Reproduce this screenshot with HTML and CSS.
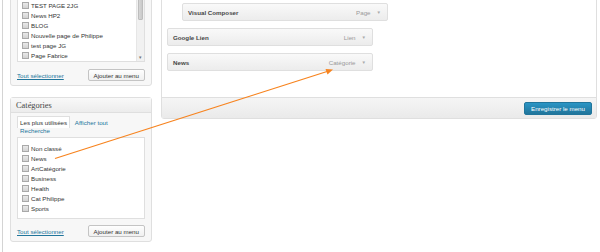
FILE: index.html
```html
<!DOCTYPE html>
<html lang="fr">
<head>
    <meta charset="UTF-8">
    <meta name="viewport" content="width=device-width, initial-scale=1.0">
    <title>Menus</title>
    <link rel="stylesheet" href="styles.css">
</head>
<body>
    <div class="screen">
        <div class="sidebar">
            <div class="box box-pages">
                <div class="checklist">
                    <ul class="items">
                        <li><span class="cb"></span>TEST PAGE 2JG</li>
                        <li><span class="cb"></span>News HP2</li>
                        <li><span class="cb"></span>BLOG</li>
                        <li><span class="cb"></span>Nouvelle page de Philippe</li>
                        <li><span class="cb"></span>test page JG</li>
                        <li><span class="cb"></span>Page Fabrice</li>
                        <li><span class="cb"></span>Visual Composer</li>
                    </ul>
                    <div class="scrollbar">
                        <span class="thumb"></span>
                        <span class="down">&#9662;</span>
                    </div>
                </div>
                <div class="box-actions">
                    <a href="#" class="select-all">Tout sélectionner</a>
                    <button class="btn">Ajouter au menu</button>
                </div>
            </div>

            <div class="box">
                <h3>Catégories</h3>
                <div class="box-inside">
                    <ul class="tabs">
                        <li class="active">Les plus utilisées</li>
                        <li><a href="#">Afficher tout</a></li>
                        <li><a href="#">Recherche</a></li>
                    </ul>
                    <div class="checklist cat-list">
                        <ul class="items">
                            <li><span class="cb"></span>Non classé</li>
                            <li><span class="cb"></span>News</li>
                            <li><span class="cb"></span>ArtCatégorie</li>
                            <li><span class="cb"></span>Business</li>
                            <li><span class="cb"></span>Health</li>
                            <li><span class="cb"></span>Cat Philippe</li>
                            <li><span class="cb"></span>Sports</li>
                        </ul>
                    </div>
                    <div class="box-actions">
                        <a href="#" class="select-all">Tout sélectionner</a>
                        <button class="btn">Ajouter au menu</button>
                    </div>
                </div>
            </div>
        </div>

        <div class="menu-panel">
            <div class="menu-body">
                <div class="menu-item depth-1">
                    <span class="item-title">Visual Composer</span>
                    <span class="item-type">Page</span>
                    <span class="item-arrow">&#9660;</span>
                </div>
                <div class="menu-item">
                    <span class="item-title">Google Lien</span>
                    <span class="item-type">Lien</span>
                    <span class="item-arrow">&#9660;</span>
                </div>
                <div class="menu-item">
                    <span class="item-title">News</span>
                    <span class="item-type">Catégorie</span>
                    <span class="item-arrow">&#9660;</span>
                </div>
            </div>
            <div class="menu-footer">
                <button class="btn btn-primary">Enregistrer le menu</button>
            </div>
        </div>
    </div>

    <!-- annotation: fleche de la categorie vers l'element du menu -->
    <svg class="annotation" width="600" height="252" viewBox="0 0 600 252">
        <line x1="55" y1="158.5" x2="327" y2="71.5" stroke="#f7831e" stroke-width="1.2"/>
        <polygon points="333,69.5 325.5,69 327.5,74.5" fill="#f7831e"/>
    </svg>
</body>
</html>
```

FILE: styles.css
```css
html, body {
    margin: 0;
    height: 100%;
}

body {
    font-family: "Liberation Sans", Arial, sans-serif;
    font-size: 6.2px;
    color: #333;
    background-color: #fff;
    overflow: hidden;
    position: relative;
}

ul {
    list-style: none;
    margin: 0;
    padding: 0;
}

a {
    color: #21759b;
    text-decoration: none;
}

/* la page est defilee de 20px vers le bas */
.screen {
    display: flex;
    align-items: flex-start;
    gap: 9px;
    margin: -20px 0 0 2px;
    padding: 0 3px 0 7px;
    border-left: 1px solid #d4d4d4;
    height: calc(100vh + 20px);
    box-sizing: border-box;
}

/* colonne de gauche */
.sidebar {
    width: 142px;
    flex-shrink: 0;
}

.box {
    background-color: #f7f7f7;
    border: 1px solid #dfdfdf;
    border-radius: 3px;
}

.box-pages {
    padding: 6px 6px 4px;
    margin-bottom: 11px;
}

.box h3 {
    margin: 0;
    height: 14px;
    line-height: 15px;
    padding-left: 5px;
    font-family: "Liberation Serif", Georgia, serif;
    font-weight: normal;
    font-size: 8.4px;
    color: #464646;
    background: linear-gradient(#f9f9f9, #ececec);
    border-bottom: 1px solid #dfdfdf;
}

.box-inside {
    padding: 6px 6px 4px;
}

.checklist {
    display: flex;
    background-color: #fff;
    border: 1px solid #dfdfdf;
}

.box-pages .checklist {
    height: 73px;
    overflow: hidden;
}

.items {
    flex: 1;
    padding: 12px 0 0 4px;
}

.cat-list .items {
    padding: 5px 0 5px 4px;
}

.items li {
    display: flex;
    align-items: center;
    height: 10px;
    white-space: nowrap;
}

.cb {
    width: 5px;
    height: 5px;
    margin-right: 2px;
    border: 1px solid #a9a9a9;
    background: linear-gradient(#e9e9e9, #d2d2d2);
}

.scrollbar {
    width: 7px;
    display: flex;
    flex-direction: column;
    background-color: #f1f1f1;
    border-left: 1px solid #e6e6e6;
}

.thumb {
    height: 30px;
    margin: 0 1px;
    background: linear-gradient(to right, #d6d6d6, #c9c9c9);
    border: 1px solid #bdbdbd;
    border-radius: 1px;
}

.down {
    margin-top: auto;
    margin-bottom: 1px;
    text-align: center;
    font-size: 5px;
    line-height: 5px;
    color: #777;
}

.box-actions {
    display: flex;
    justify-content: space-between;
    align-items: center;
    margin-top: 7px;
}

.box-inside .box-actions {
    margin-top: 6px;
}

.select-all {
    text-decoration: underline;
}

.btn {
    font-family: "Liberation Sans", Arial, sans-serif;
    font-size: 6.2px;
    height: 12px;
    padding: 0 5px;
    color: #333;
    background: linear-gradient(#fefefe, #f0f0f0);
    border: 1px solid #c4c4c4;
    border-radius: 2px;
}

.tabs {
    line-height: 8px;
    margin-bottom: 2px;
}

.tabs li {
    display: inline;
    padding: 2px 2px;
    border: 1px solid transparent;
    border-bottom: none;
}

.tabs li.active {
    background-color: #fff;
    border-color: #dfdfdf;
    color: #333;
}

/* structure du menu */
.menu-panel {
    flex: 1;
    background-color: #fff;
    border: 1px solid #dfdfdf;
    border-radius: 3px;
}

.menu-body {
    padding: 22px 5px 26px;
    display: flex;
    flex-direction: column;
    gap: 7px;
}

.menu-item {
    width: 206px;
    height: 18px;
    box-sizing: border-box;
    display: flex;
    align-items: center;
    padding: 0 6px 0 5px;
    background: linear-gradient(#f9f9f9, #ececec);
    border: 1px solid #dfdfdf;
    border-radius: 2px;
}

.menu-item.depth-1 {
    margin-left: 15px;
}

.item-title {
    font-weight: bold;
    color: #464646;
}

.item-type {
    margin-left: auto;
    color: #999;
}

.item-arrow {
    margin-left: 6px;
    font-size: 4.5px;
    color: #aaa;
}

.menu-footer {
    display: flex;
    justify-content: flex-end;
    padding: 4px 4px 3px;
    background: linear-gradient(#f5f5f5, #eaeaea);
    border-top: 1px solid #dfdfdf;
}

.btn-primary {
    height: 13px;
    padding: 0 6px;
    color: #fff;
    background: linear-gradient(#2a95c5, #21759b);
    border-color: #21759b;
}

.annotation {
    position: absolute;
    left: 0;
    top: 0;
    pointer-events: none;
}
```
